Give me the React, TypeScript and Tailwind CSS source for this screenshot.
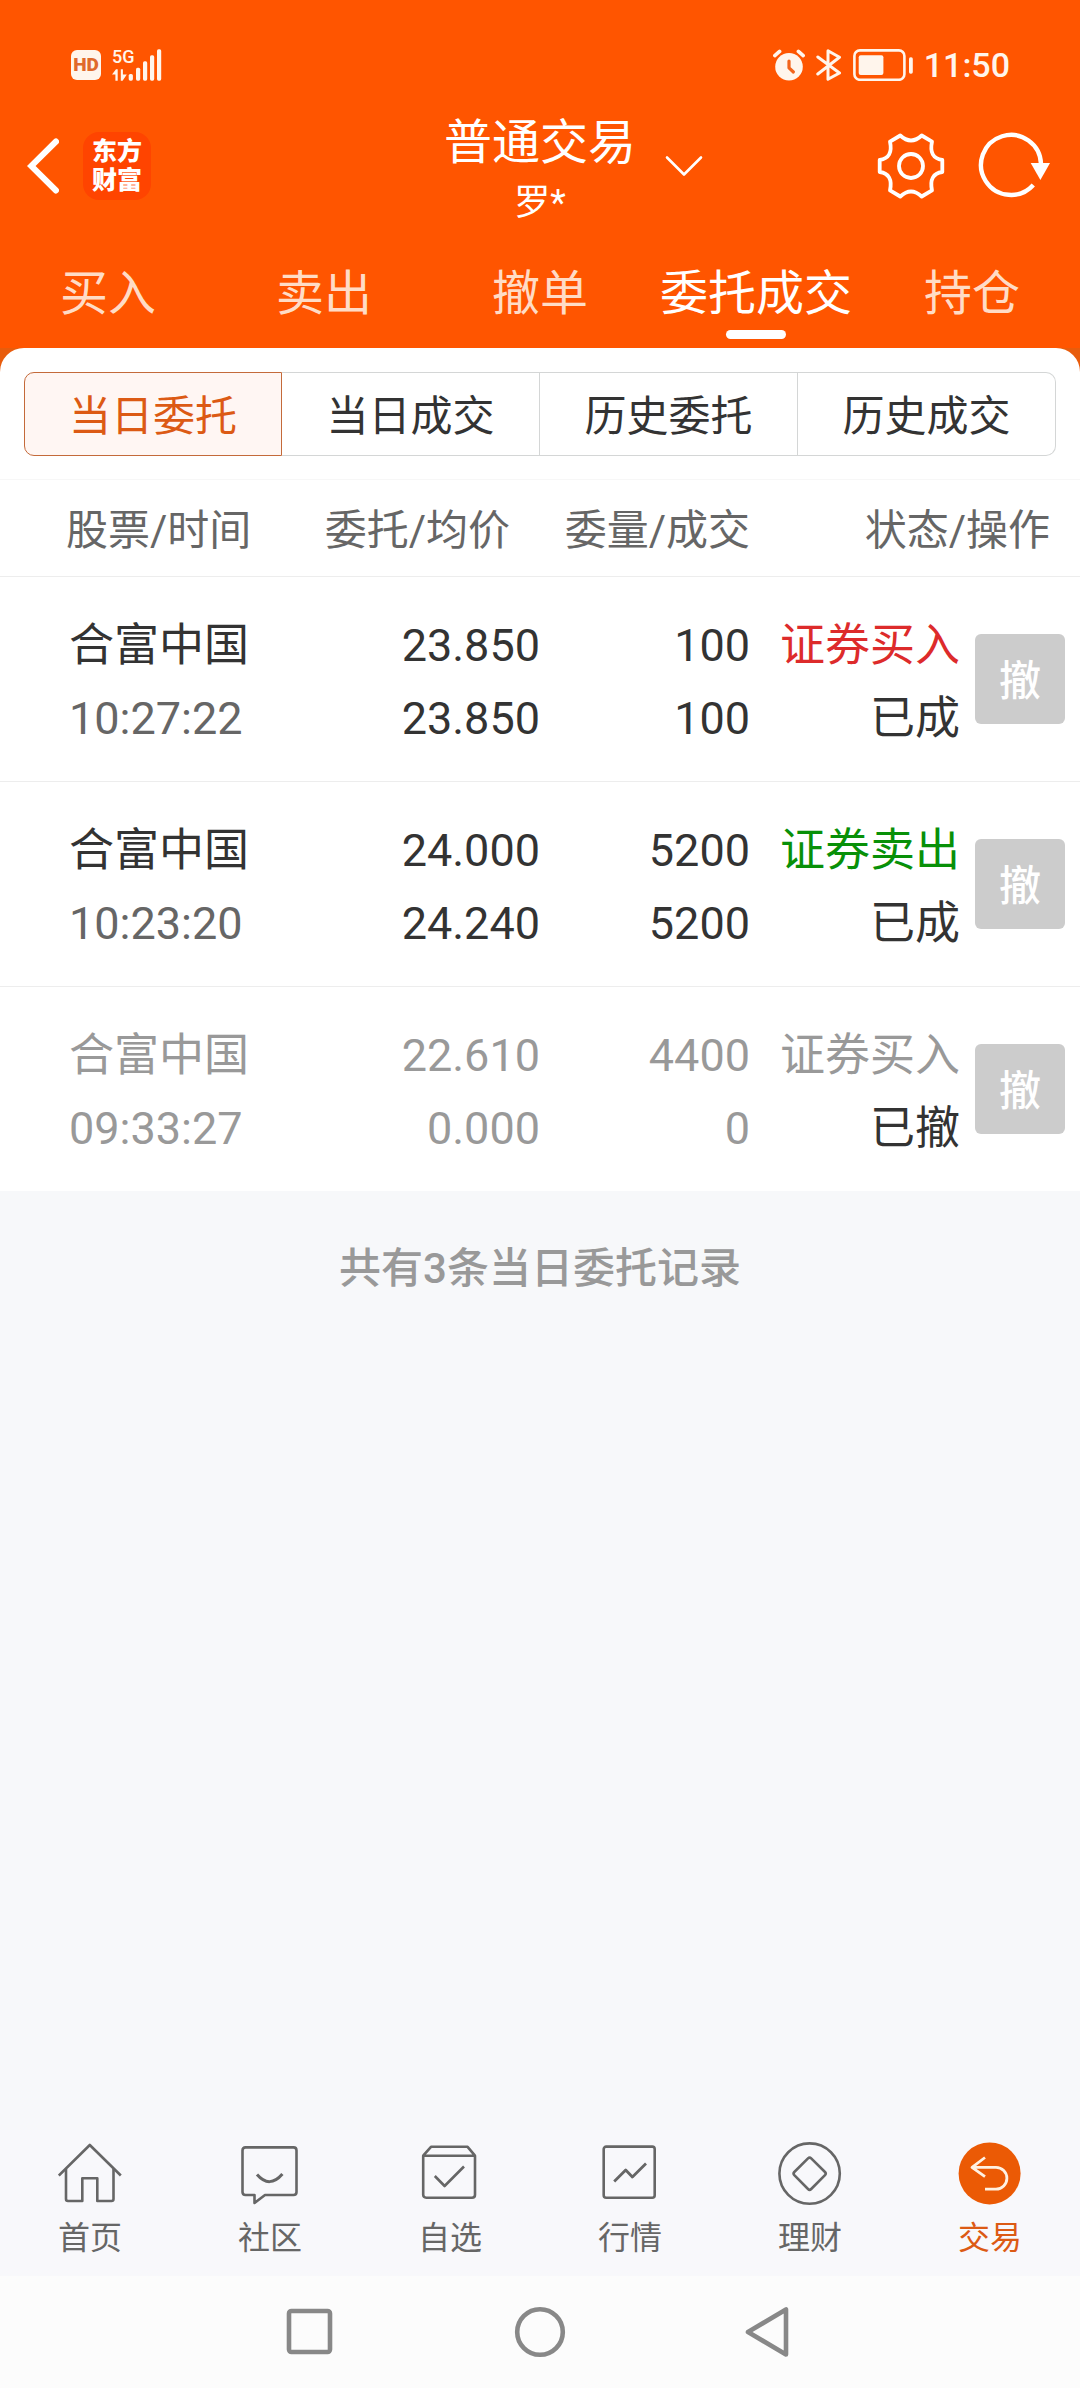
import React from "react";

const orders = [
  {
    name: "合富中国",
    time: "10:27:22",
    price: "23.850",
    average: "23.850",
    quantity: "100",
    filled: "100",
    side: "证券买入",
    sideClass: "text-[#dd2b2b]",
    status: "已成",
    muted: false,
  },
  {
    name: "合富中国",
    time: "10:23:20",
    price: "24.000",
    average: "24.240",
    quantity: "5200",
    filled: "5200",
    side: "证券卖出",
    sideClass: "text-[#089008]",
    status: "已成",
    muted: false,
  },
  {
    name: "合富中国",
    time: "09:33:27",
    price: "22.610",
    average: "0.000",
    quantity: "4400",
    filled: "0",
    side: "证券买入",
    sideClass: "text-[#999999]",
    status: "已撤",
    muted: true,
  },
];

const tradeTabs = ["买入", "卖出", "撤单", "委托成交", "持仓"];
const rangeTabs = ["当日委托", "当日成交", "历史委托", "历史成交"];

function StatusBar() {
  return (
    <div className="flex h-24 items-end justify-between pr-[70px] pb-[15px] pl-[71px] text-[#fff5ec]">
      <div className="flex items-center gap-[11px]">
        <span className="flex size-[30px] items-center justify-center rounded-md bg-[#fff5ec] text-[19px] leading-[30px] font-black text-[#e06a2c]">
          HD
        </span>
        <div className="relative h-8 w-[50px]">
          <span className="absolute -top-px left-0 text-[18px] leading-[18px] font-medium">5G</span>
          <svg viewBox="0 0 50 32" className="h-8 w-[50px]" fill="currentColor" aria-hidden="true">
            <path d="M5.7 31.7H3.4V25.6H0L4 20.3h1.7zM8.8 20.3h2.1v5.3h3.9l-4.2 6.1H8.8z" />
            <rect x="16.7" y="25" width="4.2" height="6.7" rx="1.6" />
            <rect x="24" y="18.7" width="4.2" height="13" rx="1.6" />
            <rect x="31" y="12.3" width="4.2" height="19.4" rx="1.6" />
            <rect x="38" y="6.3" width="4.2" height="25.4" rx="1.6" />
            <rect x="45" y="0.3" width="4.2" height="31.4" rx="1.6" />
          </svg>
        </div>
      </div>
      <div className="flex items-center gap-[11px]">
        <svg viewBox="0 0 32 32" className="size-8" fill="none" aria-hidden="true">
          <circle cx="16" cy="17.7" r="13.8" fill="currentColor" />
          <path d="M1.8 6.6 6.6 2.4M30.2 6.6 25.4 2.4" stroke="currentColor" strokeWidth="3.6" strokeLinecap="round" />
          <path d="M16 12v6.8l4.4 4.2" stroke="#f2641c" strokeWidth="3.2" strokeLinecap="round" strokeLinejoin="round" />
        </svg>
        <svg viewBox="0 0 26 32" className="h-8 w-[26px]" fill="none" stroke="currentColor" strokeWidth="3" strokeLinecap="round" strokeLinejoin="round" aria-hidden="true">
          <path d="M1.8 8 23.5 24 12 30.3V1.7L23.5 8.3 1.8 25" />
        </svg>
        <svg viewBox="0 0 60 32" className="h-8 w-[60px]" fill="none" aria-hidden="true">
          <rect x="1.4" y="1.4" width="50" height="29.4" rx="5.5" stroke="currentColor" strokeWidth="2.6" />
          <rect x="5.7" y="6.3" width="24.7" height="19.8" rx="2" fill="currentColor" />
          <rect x="56" y="8.3" width="3.8" height="16.4" rx="1.6" fill="currentColor" />
        </svg>
        <time className="text-[34px] leading-8 font-medium">11:50</time>
      </div>
    </div>
  );
}

function TitleBar() {
  return (
    <div className="grid h-[140px] grid-cols-[1fr_192px_1fr] items-center text-white">
      <div className="flex items-center gap-6 pl-[27px]">
        <button type="button" aria-label="返回">
          <svg viewBox="0 0 32 56" className="h-14 w-8" fill="none" stroke="currentColor" strokeWidth="6" strokeLinecap="round" strokeLinejoin="miter">
            <path d="M29 3.5 4.2 28 29 52.5" />
          </svg>
        </button>
        <div className="flex size-[68px] flex-col items-center justify-center rounded-2xl bg-[#ff4400] text-[25px] leading-[29px] font-black">
          <span>东方</span>
          <span>财富</span>
        </div>
      </div>
      <div className="pt-3.5 text-center">
        <h1 className="text-[48px] leading-[60px] font-normal whitespace-nowrap">普通交易</h1>
        <p className="text-[36px] leading-[60px]">罗*</p>
      </div>
      <div className="flex items-center justify-between pr-[25px] pl-[29px]">
        <button type="button" aria-label="切换账户">
          <svg viewBox="0 0 38 22" className="h-[22px] w-[38px]" fill="none" stroke="currentColor" strokeWidth="2.6" strokeLinecap="round" strokeLinejoin="round">
            <path d="M2 2.5 19 19.5 36 2.5" />
          </svg>
        </button>
        <div className="flex items-center">
          <button type="button" aria-label="设置">
            <svg viewBox="0 0 72 72" className="size-[72px]" fill="none" stroke="currentColor" strokeWidth="3.8" strokeLinejoin="round">
              <path d="M25.3 5.5Q36 15.5 46.7 5.5L57 11.7Q53.5 28 67.3 30V42Q53.5 44 57 60.3L46.7 66.5Q36 56.5 25.3 66.5L15 60.3Q18.5 44 4.7 42V30Q18.5 28 15 11.7Z" />
              <circle cx="36" cy="36" r="12" />
            </svg>
          </button>
          <button type="button" aria-label="刷新" className="ml-7">
            <svg viewBox="0 0 80 72" className="h-[72px] w-20" fill="none">
              <path d="M66 34A30 30 0 1 0 58.3 55" stroke="currentColor" strokeWidth="4.4" />
              <path d="M55.7 33H75L65.4 50Z" fill="currentColor" />
            </svg>
          </button>
        </div>
      </div>
    </div>
  );
}

function TradeTabs() {
  return (
    <nav className="grid h-28 grid-cols-5">
      {tradeTabs.map((tab) => {
        const active = tab === "委托成交";
        return (
          <button
            key={tab}
            type="button"
            aria-current={active ? "page" : undefined}
            className={
              "relative flex items-center justify-center pt-1 text-[48px] leading-[60px] whitespace-nowrap " +
              (active ? "text-white" : "text-[#ffdcc6]")
            }
          >
            {tab}
            {active && (
              <span className="absolute bottom-[9px] left-1/2 h-[9px] w-[60px] -translate-x-1/2 rounded-full bg-white" />
            )}
          </button>
        );
      })}
    </nav>
  );
}

function RangeTabs() {
  return (
    <div className="mx-6 mb-[23px] grid h-[84px] grid-cols-4">
      {rangeTabs.map((tab, index) => (
        <button
          key={tab}
          type="button"
          aria-pressed={index === 0}
          className={
            "flex items-center justify-center border pt-1.5 text-[42px] leading-[60px] whitespace-nowrap first:rounded-l-[10px] last:rounded-r-[10px] " +
            (index === 0
              ? "border-[#c46a3a] bg-[#fff6f3] text-[#dc5a14]"
              : "border-l-0 border-[#d4d6d6] text-[#333333]")
          }
        >
          {tab}
        </button>
      ))}
    </div>
  );
}

function OrderTable() {
  return (
    <table className="w-full table-fixed border-collapse">
      <colgroup>
        <col className="w-[28%]" />
        <col className="w-[22%]" />
        <col className="w-[210px]" />
        <col className="w-[210px]" />
        <col className="w-[120px]" />
      </colgroup>
      <thead>
        <tr className="h-[97px] border-y border-t-[#f7f7f7] border-b-[#ededed] text-[42px] leading-[60px] whitespace-nowrap text-[#666666]">
          <th scope="col" className="pt-1.5 pl-[66px] text-left font-normal">股票/时间</th>
          <th scope="col" className="pt-1.5 pr-[30px] text-right font-normal">委托/均价</th>
          <th scope="col" className="pt-1.5 text-right font-normal">委量/成交</th>
          <th scope="col" colSpan={2} className="pt-1.5 pr-[30px] text-right font-normal">状态/操作</th>
        </tr>
      </thead>
      <tbody>
        {orders.map((order) => (
          <tr
            key={order.time}
            className={
              "h-[205px] border-b border-[#ededed] text-right text-[45px] leading-[73px] whitespace-nowrap last:h-[204px] last:border-b-0 " +
              (order.muted ? "text-[#999999]" : "text-[#333333]")
            }
          >
            <td className="pt-1.5 pl-[69px] text-left">
              <div>{order.name}</div>
              <div className={order.muted ? "text-[#999999]" : "text-[#666666]"}>{order.time}</div>
            </td>
            <td className="pt-1.5">
              <div>{order.price}</div>
              <div>{order.average}</div>
            </td>
            <td className="pt-1.5">
              <div>{order.quantity}</div>
              <div>{order.filled}</div>
            </td>
            <td className="pt-1.5">
              <div className={order.sideClass}>{order.side}</div>
              <div className="text-[#333333]">{order.status}</div>
            </td>
            <td className="pr-[15px]">
              <button
                type="button"
                className="ml-auto flex size-[90px] items-center justify-center rounded-md bg-[#cccccc] pt-1.5 text-[42px] leading-[60px] font-medium text-white"
              >
                撤
              </button>
            </td>
          </tr>
        ))}
      </tbody>
    </table>
  );
}

const navItems = [
  {
    label: "首页",
    icon: (
      <>
        <path d="M0.8 33.5 31.8 3 62.8 33.5" />
        <path d="M8 27V57q0 2 2 2H24.3V36.3H39.3V59H53.5q2 0 2-2V27" />
      </>
    ),
  },
  {
    label: "社区",
    icon: (
      <>
        <path d="M7.5 5.4H55.5q3 0 3 3V50q0 3-3 3H27L16.5 61V53H7.5q-3 0-3-3V8.4q0-3 3-3Z" />
        <path d="M19 32.5Q31.5 47 44.4 32" strokeWidth="3" />
      </>
    ),
  },
  {
    label: "自选",
    icon: (
      <>
        <path d="M5.2 13.7H57V52.7q0 3-3 3H8.2q-3 0-3-3ZM5.2 13.7 13 4.8H49.6L57 13.7" />
        <path d="m16.8 34 9.8 10L46 24.5" />
      </>
    ),
  },
  {
    label: "行情",
    icon: (
      <>
        <rect x="5.7" y="4.6" width="51" height="51.2" rx="2.5" />
        <path d="M16.2 39.5 27.7 28 34.4 35 48 21.6" strokeWidth="2.8" />
      </>
    ),
  },
  {
    label: "理财",
    icon: (
      <>
        <circle cx="31.6" cy="31.6" r="30.2" />
        <path d="M30 16.4q1.6-1.6 3.2 0L47 30q1.5 1.6 0 3.2L33.2 47q-1.6 1.6-3.2 0L16.3 33.2q-1.5-1.6 0-3.2Z" />
      </>
    ),
  },
  {
    label: "交易",
    icon: (
      <>
        <circle cx="31.6" cy="31.4" r="31" fill="#eb5a05" stroke="none" />
        <path d="M27 15.5 14 25.3 27 34.7M14 25.3H38A10.9 10.9 0 0 1 38 47.1H27" stroke="#fff1e2" strokeWidth="2.8" />
      </>
    ),
  },
];

function BottomNav() {
  return (
    <nav className="grid h-[146px] grid-cols-6 bg-[#f8f8fb] pt-3">
      {navItems.map((item) => (
        <a
          key={item.label}
          href="#"
          className={"flex flex-col items-center " + (item.label === "交易" ? "text-[#dc5a14]" : "text-[#666666]")}
        >
          <svg viewBox="0 0 64 64" className="size-16" fill="none" stroke="currentColor" strokeWidth="2.6" strokeLinejoin="round" aria-hidden="true">
            {item.icon}
          </svg>
          <span className="mt-2 text-[32px] leading-[48px]">{item.label}</span>
        </a>
      ))}
    </nav>
  );
}

function SystemNav() {
  return (
    <div className="flex h-28 items-center justify-center gap-[178px] bg-[#fcfcfc] text-[#888888]">
      <button type="button" aria-label="最近任务">
        <svg viewBox="0 0 52 52" className="size-[52px]" fill="none" stroke="currentColor" strokeWidth="4.6">
          <rect x="5" y="5" width="41" height="41" rx="2.5" />
        </svg>
      </button>
      <button type="button" aria-label="主屏幕">
        <svg viewBox="0 0 52 52" className="size-[52px]" fill="none" stroke="currentColor" strokeWidth="4.6">
          <circle cx="26" cy="26" r="22.8" />
        </svg>
      </button>
      <button type="button" aria-label="后退">
        <svg viewBox="0 0 52 52" className="size-[52px]" fill="none" stroke="currentColor" strokeWidth="4.6" strokeLinejoin="round">
          <path d="M42 3.5V48.5L4 26Z" />
        </svg>
      </button>
    </div>
  );
}

export default function App() {
  return (
    <div className="flex min-h-screen flex-col bg-[#f7f8fa] font-['Roboto','Noto_Sans_CJK_SC',sans-serif]" lang="zh-CN">
      <header className="bg-[#ff5500]">
        <StatusBar />
        <TitleBar />
        <TradeTabs />
      </header>
      <main className="flex-1">
        <div className="bg-[#e85c0c]">
          <div className="rounded-t-3xl bg-white pt-6">
            <RangeTabs />
            <OrderTable />
          </div>
        </div>
        <p className="pt-12 text-center text-[42px] leading-[60px] font-medium text-[#999999]">
          共有3条当日委托记录
        </p>
      </main>
      <BottomNav />
      <SystemNav />
    </div>
  );
}
